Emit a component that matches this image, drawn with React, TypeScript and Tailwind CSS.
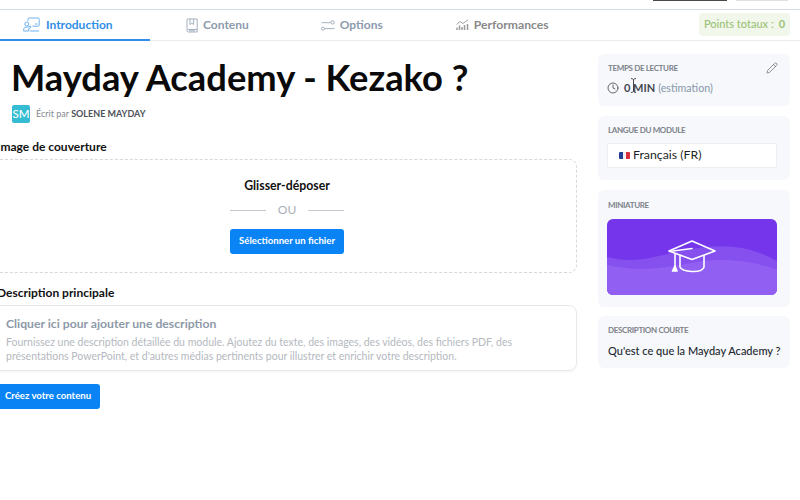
import { Clock, Pencil } from 'lucide-react'

function IntroIcon() {
  return (
    <svg width="17" height="15" viewBox="0 0 17 15" fill="none" stroke="currentColor" strokeWidth="0.9" className="text-[#5fa8ee]">
      <path d="M5 4V2.2C5 1.5 5.5 1 6.2 1H15c.7 0 1.2.5 1.2 1.2V8c0 .7-.5 1.2-1.2 1.2H9.5" />
      <path d="M12 7h2.5" />
      <circle cx="3.8" cy="7" r="2" />
      <path d="M0.7 14v-1.5c0-1.4 1-2.4 2.4-2.4h1.6l3-1v1.6l-2 1V14z" />
      <path d="M7 14H16" />
    </svg>
  )
}

function BookIcon() {
  return (
    <svg width="12" height="15" viewBox="0 0 12 15" fill="none" stroke="#9aa8b8" strokeWidth="0.9">
      <path d="M1 11.5V1.8C1 1.2 1.3 1 1.8 1h9.4v13H2.2C1.5 14 1 13.4 1 12.7c0-.7.5-1.2 1.2-1.2h9" />
      <path d="M4 1v5.5l1.8-1.3 1.8 1.3V1" />
      <path d="M3 12.8h6" />
    </svg>
  )
}

function OptionsIcon() {
  return (
    <svg width="14" height="11" viewBox="0 0 14 11" fill="none" stroke="#9aa8b8" strokeWidth="0.9">
      <path d="M0.5 2.7H9.5" />
      <circle cx="11.6" cy="2.4" r="1.7" />
      <circle cx="2" cy="8.6" r="1.5" />
      <path d="M4 8.6H13.5" />
    </svg>
  )
}

function ChartIcon() {
  return (
    <svg width="13" height="12" viewBox="0 0 13 12" fill="none" stroke="#9b9b9b">
      <path d="M0.5 5.5L4 2.5l3 2L12 0.8" strokeWidth="0.9" />
      <path d="M1 11V8.5M3.5 11V6.5M6 11V8M8.5 11V6M11.5 11V5" strokeWidth="1.5" />
    </svg>
  )
}

function CapIcon() {
  return (
    <svg width="48" height="35" viewBox="0 0 48 35" fill="none" stroke="white" strokeWidth="1.6" strokeLinejoin="round" strokeLinecap="round">
      <path d="M24 1L47 11 24 19.5 1 11z" />
      <path d="M1.5 11.5L24 8.5" />
      <path d="M12 15.5V27c2 5 22 7 24 0V15.5" />
      <path d="M7 14v14" />
      <path d="M4.5 31l2.5-5 2 5z" fill="white" />
    </svg>
  )
}

function TextCursor() {
  return (
    <svg width="7" height="15" viewBox="0 0 7 15" fill="none" stroke="#333" strokeWidth="0.9" className="absolute left-[32px] top-[24px]">
      <path d="M1 0.5c1 0 2 .5 2.5 1 .5-.5 1.500-1 2.500-1M3.500 1.500v12M1 14.500c1 0 2-.5 2.500-1 .5.5 1.500 1 2.500 1" />
    </svg>
  )
}

function FrFlag() {
  return (
    <span className="flex h-[7px] w-[11px] shrink-0 overflow-hidden rounded-[1px]">
      <span className="flex-1 bg-[#1f3f94]" />
      <span className="flex-1 bg-[#f1f1f4]" />
      <span className="flex-1 bg-[#d8303c]" />
    </span>
  )
}

const labelClass = 'text-[8px] font-bold uppercase leading-[12px] tracking-[-0.35px] text-[#7d828a]'

export default function App() {
  return (
    <div className="h-[500px] w-[800px] overflow-hidden bg-white font-['Lato',sans-serif]">
      {/* Strip above the tabs */}
      <div className="flex h-[9px] items-start bg-white">
        <div className="ml-[653px] h-px w-[74px] bg-[#4a4a4a]" />
        <div className="ml-[9px] h-px w-[52px] bg-[#dfe1e5]" />
      </div>

      {/* Tabs */}
      <div className="flex h-[32px] items-stretch border-t border-b border-t-[#d3dae3] border-b-[#e8ebef]">
        <div className="-mb-px flex w-[150px] items-center gap-[6px] border-b-2 border-[#2f8ee6] pl-[23px] text-[12px] font-bold text-[#2f8ee6]">
          <IntroIcon />
          <span>Introduction</span>
        </div>
        <div className="ml-[36px] flex items-center gap-[5px] text-[12px] font-bold text-[#8b9aad]">
          <BookIcon />
          <span>Contenu</span>
        </div>
        <div className="ml-[72px] flex items-center gap-[5px] text-[12px] font-bold text-[#8b9aad]">
          <OptionsIcon />
          <span>Options</span>
        </div>
        <div className="ml-[73px] flex items-center gap-[5px] text-[12.2px] font-bold text-[#8a8a8a]">
          <ChartIcon />
          <span>Performances</span>
        </div>
        <div className="ml-auto mr-[10px] mt-[3px] flex h-[23px] w-[91px] items-center justify-center gap-[5px] rounded-[4px] bg-[#f1f7ea] text-[11px] font-medium text-[#9cc278]">
          <span>Points totaux :</span>
          <span className="font-bold">0</span>
        </div>
      </div>

      <div className="flex">
        {/* Main column */}
        <div className="w-[577px] shrink-0">
          <h1 className="ml-[11px] mt-[13px] text-[36.3px] font-bold leading-[46px] text-[#0a0a0a]">Mayday Academy - Kezako ?</h1>
          <div className="ml-[12px] mt-[5px] flex items-center gap-[6px]">
            <div className="flex h-[18px] w-[18px] items-center justify-center rounded-[2px] bg-[#35bcd3] text-[11.5px] font-medium text-white">SM</div>
            <span className="text-[9px] text-[#85898f]">
              Écrit par <span className="font-bold text-[#4d5159]">SOLENE MAYDAY</span>
            </span>
          </div>

          <div className="-ml-[3px] mt-[16px] text-[12px] font-bold leading-[16px] text-[#111]">Image de couverture</div>
          <div className="-ml-[8px] mt-[4px] flex h-[114px] flex-col items-center rounded-[8px] border border-dashed border-[#d5d8dc] pl-[5px]">
            <div className="mt-[18px] text-[12.3px] font-bold leading-[16px] text-[#111]">Glisser-déposer</div>
            <div className="mt-[8px] flex items-center gap-[12px]">
              <div className="h-px w-[36px] bg-[#c4c9cf]" />
              <span className="text-[12px] leading-[16px] text-[#a9afb7]">OU</span>
              <div className="h-px w-[36px] bg-[#c4c9cf]" />
            </div>
            <button className="mt-[11px] flex h-[25px] w-[114px] items-center justify-center rounded-[3px] bg-[#0a84f5] text-[9.6px] font-bold text-white">
              Sélectionner un fichier
            </button>
          </div>

          <div className="-ml-[3px] mt-[12px] text-[12px] font-bold leading-[16px] text-[#111]">Description principale</div>
          <div className="-ml-[8px] mt-[4px] h-[66px] rounded-[8px] border border-[#e6e8eb] pl-[13px] pt-[10px] shadow-[0_1px_2px_rgba(0,0,0,0.05)]">
            <div className="text-[12.2px] font-bold leading-[16px] text-[#8d99a8]">Cliquer ici pour ajouter une description</div>
            <p className="mt-[3px] w-[520px] text-[10.5px] leading-[14px] text-[#b4b9c0]">
              Fournissez une description détaillée du module. Ajoutez du texte, des images, des vidéos, des fichiers PDF, des présentations PowerPoint, et d'autres médias pertinents pour illustrer et enrichir votre description.
            </p>
          </div>

          <button className="-ml-[8px] mt-[13px] flex h-[25px] w-[108px] items-center justify-center rounded-[3px] bg-[#0a84f5] pl-[4px] text-[9.6px] font-bold text-white">
            Créez votre contenu
          </button>
        </div>

        {/* Side column */}
        <div className="ml-[21px] mt-[13px] flex w-[192px] shrink-0 flex-col gap-[10px]">
          <div className="relative h-[52px] rounded-[6px] bg-[#f6f8fb] px-[10px] pt-[8px]">
            <div className={labelClass}>Temps de lecture</div>
            <Pencil size={12} strokeWidth={1.4} className="absolute right-[12px] top-[8px] text-[#5f646c]" />
            <TextCursor />
            <div className="mt-[6px] flex items-center text-[11px] leading-[16px]">
              <Clock size={12} strokeWidth={1.6} className="mr-[5px] -ml-px text-[#3f434a]" />
              <span className="font-bold text-[#44484f]">0 MIN</span>
              <span className="ml-[3px] text-[10.7px] text-[#8797aa]">(estimation)</span>
            </div>
          </div>

          <div className="h-[64px] rounded-[6px] bg-[#f6f8fb] px-[10px] pt-[8px]">
            <div className={labelClass}>Langue du module</div>
            <div className="-ml-px mt-[7px] flex h-[25px] w-[170px] items-center gap-[3px] rounded-[2px] border border-[#eceef1] bg-white pl-[11px] text-[12.3px] text-[#1b1f26]">
              <FrFlag />
              <span>Français (FR)</span>
            </div>
          </div>

          <div className="h-[117px] rounded-[6px] bg-[#f6f8fb] px-[10px] pt-[9px]">
            <div className={labelClass}>Miniature</div>
            <div className="relative -ml-px mt-[8px] flex h-[76px] w-[170px] items-center justify-center overflow-hidden rounded-[6px] bg-[#7535ea]">
              <svg className="absolute inset-0" width="170" height="76" viewBox="0 0 170 76">
                <path d="M0 38C30 46 50 36 85 30s60-2 85 12v34H0z" fill="#8550ee" />
                <path d="M0 46c35 8 60 2 90-3s60 0 80 8v25H0z" fill="#9160f3" />
              </svg>
              <div className="relative">
                <CapIcon />
              </div>
            </div>
          </div>

          <div className="-mt-px h-[52px] rounded-[6px] bg-[#f6f8fb] px-[10px] pt-[8px]">
            <div className={labelClass}>Description courte</div>
            <div className="mt-[7px] whitespace-nowrap text-[11px] font-medium leading-[16px] text-[#23272e]">Qu'est ce que la Mayday Academy ?</div>
          </div>
        </div>
      </div>
    </div>
  )
}
